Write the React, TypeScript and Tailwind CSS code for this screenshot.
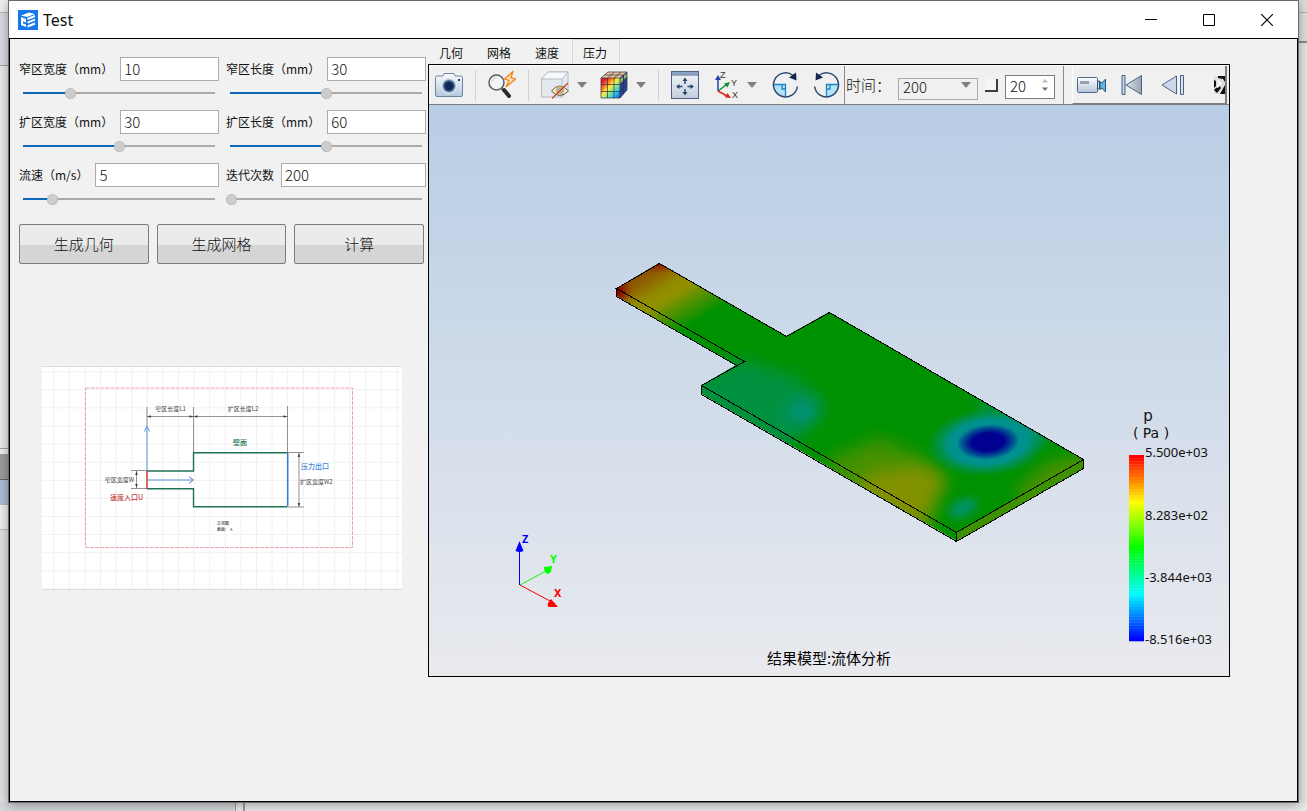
import { ReactNode, useState } from "react";

type SliderFieldProps = {
  id: string;
  label: string;
  initial: number;
  min: number;
  max: number;
};

const SliderField = (props: SliderFieldProps) => {
  const [value, setValue] = useState(props.initial);
  const fill = ((value - props.min) / (props.max - props.min)) * 100;

  return (
    <div className="flex min-w-0 flex-col">
      <div className="flex h-6 items-center gap-[7px]">
        <label htmlFor={props.id} className="shrink-0 text-xs">
          {props.label}
        </label>
        <input
          id={props.id}
          value={value}
          onChange={(e) => setValue(Number(e.target.value) || 0)}
          className="h-6 w-0 min-w-0 flex-1 border border-[#ababab] bg-white px-[3px] pb-0.5 text-[15px] font-light outline-none"
        />
      </div>
      <input
        type="range"
        aria-label={props.label}
        min={props.min}
        max={props.max}
        value={value}
        onChange={(e) => setValue(Number(e.target.value))}
        style={{
          backgroundImage: `linear-gradient(to right, #0d67b8 ${fill}%, #ababab ${fill}%)`,
        }}
        className="h-6 w-full appearance-none bg-transparent bg-[length:calc(100%-8px)_2px] bg-center bg-no-repeat [&::-webkit-slider-thumb]:h-[11px] [&::-webkit-slider-thumb]:w-[11px] [&::-webkit-slider-thumb]:appearance-none [&::-webkit-slider-thumb]:rounded-full [&::-webkit-slider-thumb]:border [&::-webkit-slider-thumb]:border-dotted [&::-webkit-slider-thumb]:border-[#a8a8a8] [&::-webkit-slider-thumb]:bg-[#cdcdcd]"
      />
    </div>
  );
};

const fields: SliderFieldProps[] = [
  { id: "narrow-width", label: "窄区宽度（mm）", initial: 10, min: 2, max: 35 },
  { id: "narrow-length", label: "窄区长度（mm）", initial: 30, min: 0, max: 60 },
  { id: "wide-width", label: "扩区宽度（mm）", initial: 30, min: 0, max: 60 },
  { id: "wide-length", label: "扩区长度（mm）", initial: 60, min: 0, max: 120 },
  { id: "velocity", label: "流速（m/s）", initial: 5, min: 2, max: 22 },
  { id: "iterations", label: "迭代次数", initial: 200, min: 200, max: 1000 },
];

const ActionButton = ({ children }: { children: ReactNode }) => (
  <button className="h-10 rounded-[2px] border border-[#7c7c7c] bg-[linear-gradient(#ebebeb_52%,#d5d5d5_52%)] text-[15px] font-light">
    {children}
  </button>
);

const gridX = Array.from({ length: 23 }, (_, i) => 53.7 + i * 15.6);
const gridY = Array.from({ length: 13 }, (_, i) => 371.7 + i * 18.1);

const Schematic = () => (
  <svg viewBox="42 366 360 224" className="h-auto w-full">
    <rect x="42" y="366" width="360" height="224" fill="#fff" />
    <g stroke="#f1f1f1">
      {gridX.map((x) => (
        <path key={x} d={`M${x} 366V590`} />
      ))}
      {gridY.map((y) => (
        <path key={y} d={`M42 ${y}H402`} />
      ))}
    </g>
    <path d="M42 366.5H402M42 589.5H402" stroke="#dcdcdc" />
    <rect x="85.5" y="388" width="267" height="159.5" fill="none" stroke="#f0a4a8" strokeDasharray="4 1" />
    <g stroke="#777" strokeWidth=".8" fill="none">
      <path d="M147 407V426M193.5 407V453M287.5 406V453M147 416.5H287.5" />
      <path d="M131 470.5H147M131 488.5H147M136.5 471V488M288 452.5H304M288 507H304M299 453V507" />
    </g>
    <path
      d="M147 416.5l4-1.3v2.6zM193.5 416.5l-4-1.3v2.6zM193.5 416.5l4-1.3v2.6zM287.5 416.5l-4-1.3v2.6zM136.5 471l-1.3 4h2.6zM136.5 488l-1.3-4h2.6zM299 453l-1.3 4h2.6zM299 507l-1.3-4h2.6z"
      fill="#444"
    />
    <g fill="none" stroke="#5b8fe0" strokeWidth="1">
      <path d="M147 471V426M144.3 431.5l2.7-5 2.7 5M148 480H193M189 476.7l4.5 3.3-4.5 3.3" />
    </g>
    <path
      d="M147 471H193.5V452.7H287.5M147 488.8H193.5V506.7H287.5"
      fill="none"
      stroke="#1f7551"
      strokeWidth="1.4"
    />
    <path d="M147 471V489" stroke="#cc3a3a" strokeWidth="1.5" />
    <path d="M287.7 453V506" stroke="#2f78e6" strokeWidth="1.5" />
    <g fill="#444" fontSize="6">
      <text x="170.5" y="411" textAnchor="middle">窄区长度L1</text>
      <text x="243" y="411" textAnchor="middle">扩区长度L2</text>
      <text x="134" y="482" textAnchor="end">窄区宽度W</text>
      <text x="300" y="484">扩区宽度W2</text>
    </g>
    <g fontSize="7" fontWeight="500">
      <text x="240" y="445" textAnchor="middle" fill="#1f7551">壁面</text>
      <text x="301" y="469" fill="#3d85dc">压力出口</text>
      <text x="110" y="500" fill="#c63d3d">速度入口U</text>
    </g>
    <g fontSize="4" fill="#222">
      <text x="217" y="525">正视图</text>
      <text x="217" y="531">截面：  A</text>
    </g>
  </svg>
);

const ToolButton = ({ label, children }: { label: string; children: ReactNode }) => (
  <button aria-label={label} className="flex shrink-0 items-center">
    {children}
  </button>
);

const Separator = () => <div className="mx-3 h-[31px] w-px shrink-0 bg-[#d0d0d0]" />;

const Arrow = ({ label }: { label: string }) => (
  <ToolButton label={label}>
    <svg width="10" height="6" viewBox="0 0 10 6">
      <path d="M0 0h10L5 6z" fill="#808080" />
    </svg>
  </ToolButton>
);

const CameraIcon = () => (
  <svg width="28" height="28" viewBox="0 0 28 28">
    <defs>
      <linearGradient id="cam" x2="0" y2="1">
        <stop stopColor="#fdfdff" />
        <stop offset="1" stopColor="#b3c8dd" />
      </linearGradient>
    </defs>
    <path d="M2 5h6l1-2.500h10L20 5h6q1.500 0 1.500 1.500V24q0 1.500-1.500 1.500H2Q.500 25.500.500 24V6.500Q.500 5 2 5z" fill="url(#cam)" stroke="#6c84a6" />
    <circle cx="14" cy="15" r="7.500" fill="#a9bccf" stroke="#e8eff6" />
    <circle cx="14" cy="15" r="6" fill="#4d6a92" />
    <circle cx="14" cy="15" r="4.500" fill="#10275a" />
    <path d="M23 9h2" stroke="#24406f" strokeWidth="2" />
  </svg>
);

const MagnifierIcon = () => (
  <svg width="28" height="28" viewBox="0 0 28 28">
    <path d="M13 17l3 3" stroke="#777" strokeWidth="2" />
    <path d="M16 19l5 6" stroke="#2b2b2b" strokeWidth="4" strokeLinecap="round" />
    <circle cx="8.500" cy="11.500" r="7.500" fill="#f3f6f8" stroke="#5a5d61" strokeWidth="1.500" />
    <path d="M4 11q1-4.500 5-4.500" stroke="#cfd8e0" fill="none" strokeWidth="1.500" />
    <path d="M25 .500L16.500 8l4.500 1.500L18 16 27.500 8 23 6.500z" fill="#ffe0b0" stroke="#f08519" strokeWidth="1.300" />
  </svg>
);

const HideCubeIcon = () => (
  <svg width="28" height="28" viewBox="0 0 28 28">
    <path d="M.500 8L7 1h20v18l-6 7H.500z" fill="#e4e9f0" stroke="#b4bbc7" />
    <path d="M.500 8L7 1h20l-6 7zM21 8v18" fill="#f7f9fb" stroke="#b4bbc7" />
    <path d="M10.500 20q8-10 17 0-9 9-17 0z" fill="#f8ebc2" stroke="#555b66" />
    <circle cx="19" cy="19.500" r="3.500" fill="#9fb2c6" stroke="#d9b25a" strokeWidth="1.500" />
    <path d="M11 27.500L27 12" stroke="#d2452d" strokeWidth="1.300" />
  </svg>
);

const ColorCubeIcon = () => (
  <svg width="28" height="28" viewBox="0 0 28 28">
    <defs>
      <linearGradient id="cube" x2="1" y2="1">
        <stop offset=".15" stopColor="#e8202a" />
        <stop offset=".32" stopColor="#ff8a1e" />
        <stop offset=".45" stopColor="#ffee3a" />
        <stop offset=".6" stopColor="#8fe58a" />
        <stop offset=".78" stopColor="#28c6ee" />
        <stop offset="1" stopColor="#1550c8" />
      </linearGradient>
    </defs>
    <path d="M1 7h19v20H1z" fill="url(#cube)" />
    <path d="M1 7l7-6h19l-7 6z" fill="#eac39f" />
    <path d="M20 7l7-6v18l-7 8z" fill="#27429c" />
    <path d="M20 8l3-2v4l-3 3zM24 4.500l3-2v3l-3 3z" fill="#93b95e" />
    <path
      d="M1 7h19v20H1zM1 13.500h19M1 20.500h19M7.500 7v20M14 7v20M1 7l7-6h19l-7 6M20 27l7-8V1M7.500 7l7-6M14 7l7-6M4.500 4h19v19M20 13.500l7-6M20 20.500l7-7"
      fill="none"
      stroke="#2b3040"
      strokeWidth=".7"
    />
  </svg>
);

const FitIcon = () => (
  <svg width="28" height="28" viewBox="0 0 28 28">
    <defs>
      <linearGradient id="fit" x2="0" y2="1">
        <stop stopColor="#f4f6fa" />
        <stop offset="1" stopColor="#c3cddd" />
      </linearGradient>
    </defs>
    <rect x=".5" y=".5" width="27" height="27" fill="url(#fit)" stroke="#4e6284" />
    <path d="M1 1h26v2.500H1z" fill="#8aa3c8" />
    <path d="M1 4h26" stroke="#4e6284" />
    <path d="M14 13V9M14 18v4M11.500 15.500h-4M16.500 15.500h4" stroke="#2a4470" strokeWidth="1.400" />
    <path d="M14 6.500l2.500 3.500h-5zM14 24.500l2.500-3.500h-5zM5 15.500l3.500-2.500v5zM23 15.500L19.500 13v5z" fill="#2a4470" />
  </svg>
);

const AxesIcon = () => (
  <svg width="26" height="30" viewBox="0 0 26 30">
    <path d="M3 21V9" stroke="#2244a8" strokeWidth="1.500" />
    <path d="M3 5l3 5H0z" fill="#2244a8" />
    <path d="M3 21l8-6" stroke="#15893c" strokeWidth="1.500" />
    <path d="M15 12l-2.500 5.500-3.500-4z" fill="#15893c" />
    <path d="M3 21l9 5" stroke="#e2201d" strokeWidth="1.500" />
    <path d="M16 28l-6-.500 2.500-4.500z" fill="#e2201d" />
    <g fontSize="9" fill="#333" fontFamily="Liberation Sans, sans-serif">
      <text x="5" y="8">Z</text>
      <text x="16" y="16">Y</text>
      <text x="17" y="28">X</text>
    </g>
  </svg>
);

const RotateIcon = ({ mirrored }: { mirrored?: boolean }) => (
  <svg width="27" height="28" viewBox="0 0 27 28" className={mirrored ? "-scale-x-100" : ""}>
    <path d="M1.500 14H13.500v12A12 12 0 0 1 1.500 14z" fill="#b5e2f7" />
    <path d="M1.500 13.500H13.500v12.500M10 13.500V18h3.500" fill="none" stroke="#1b86c4" strokeWidth="1.300" />
    <path d="M21 4.500A12 12 0 1 0 25.400 15.500" fill="none" stroke="#2c4772" strokeWidth="1.500" />
    <path d="M24 1.500L24.500 9.500 17 6.500z" fill="#15284f" />
  </svg>
);

const VideoIcon = () => (
  <svg width="30" height="18" viewBox="0 0 30 18">
    <defs>
      <linearGradient id="vid" x2="0" y2="1">
        <stop stopColor="#fff" />
        <stop offset="1" stopColor="#b4c3da" />
      </linearGradient>
    </defs>
    <rect x=".5" y="1.500" width="20" height="15" rx="1" fill="url(#vid)" stroke="#4f668c" />
    <rect x="3" y="5" width="9" height="3" fill="#9aa0a8" />
    <path d="M20.500 5h2v8h-2z" fill="#c9d8e8" stroke="#31547d" />
    <path d="M23 5.500l2 1.500 3.500-4v13L25 12l-2 1.500z" fill="#5cb5dd" stroke="#31547d" />
  </svg>
);

const FirstIcon = () => (
  <svg width="22" height="22" viewBox="0 0 22 22">
    <defs>
      <linearGradient id="first" x2="1">
        <stop stopColor="#dde1e7" />
        <stop offset="1" stopColor="#9aa2ae" />
      </linearGradient>
    </defs>
    <path d="M1 1.500h3v19H1z" fill="#c5d2e4" stroke="#4a6288" />
    <path d="M20.500 1.500v19L5 11z" fill="url(#first)" stroke="#4a6288" />
  </svg>
);

const BackIcon = () => (
  <svg width="24" height="22" viewBox="0 0 24 22">
    <path d="M15.500 2v18L1 11z" fill="#cdd9e9" stroke="#4a6288" />
    <path d="M19.500 1.500h3v19h-3z" fill="#dce5f0" stroke="#4a6288" />
  </svg>
);

const Toolbar = () => (
  <div className="flex h-10 items-center overflow-hidden border-y border-t-white border-b-[#7d7d7d] bg-[#f0f0f0] pl-1.5">
    <ToolButton label="截图"><CameraIcon /></ToolButton>
    <Separator />
    <ToolButton label="缩放"><MagnifierIcon /></ToolButton>
    <Separator />
    <div className="flex items-center gap-2">
      <ToolButton label="隐藏"><HideCubeIcon /></ToolButton>
      <Arrow label="隐藏选项" />
    </div>
    <div className="ml-[13px] flex items-center gap-2">
      <ToolButton label="云图"><ColorCubeIcon /></ToolButton>
      <Arrow label="云图选项" />
    </div>
    <Separator />
    <ToolButton label="适应窗口"><FitIcon /></ToolButton>
    <div className="mr-[15px] ml-4 flex items-center gap-1.5">
      <ToolButton label="视角"><AxesIcon /></ToolButton>
      <Arrow label="视角选项" />
    </div>
    <div className="flex items-center gap-3.5">
      <ToolButton label="顺时针旋转"><RotateIcon /></ToolButton>
      <ToolButton label="逆时针旋转"><RotateIcon mirrored /></ToolButton>
    </div>
    <div className="ml-1 flex h-full shrink-0 items-center gap-[7px] border-x border-[#8a8a8a] pr-2 pl-px">
      <label htmlFor="time" className="text-[15px] font-light">时间：</label>
      <div className="relative h-[22px] w-20">
        <select
          id="time"
          className="h-full w-full appearance-none border border-[#ababab] bg-transparent pb-1 pl-1 text-[15px] leading-4 font-light"
        >
          <option>200</option>
        </select>
        <svg width="10" height="6" viewBox="0 0 10 6" className="pointer-events-none absolute top-2 right-[7px]">
          <path d="M0 0h10L5 6z" fill="#808080" />
        </svg>
      </div>
      <input
        type="checkbox"
        aria-label="循环"
        className="size-[13px] appearance-none border-r-2 border-b-2 border-[#3c3c3c] bg-[#f6f6f6]"
      />
      <div className="relative h-6 w-[50px]">
        <input
          type="number"
          aria-label="间隔"
          defaultValue={20}
          className="h-full w-full border border-[#7c7c7c] bg-white pb-0.5 pl-1 text-[15px] font-light outline-none [appearance:textfield] [&::-webkit-inner-spin-button]:appearance-none"
        />
        <svg width="6" height="12" viewBox="0 0 6 12" className="pointer-events-none absolute top-1.5 right-[7px]">
          <path d="M0 3.500L3 0l3 3.500z" fill="#bdbdbd" />
          <path d="M0 8.500h6L3 12z" fill="#707070" />
        </svg>
      </div>
    </div>
    <div className="mr-0.5 ml-2 flex h-full min-w-0 flex-1 items-center border-r-2 border-b border-l border-[#7d7d7d] border-l-white pl-1">
      <ToolButton label="录像"><VideoIcon /></ToolButton>
      <div className="ml-3.5 flex flex-1 items-center gap-[18px]">
        <ToolButton label="首帧"><FirstIcon /></ToolButton>
        <ToolButton label="后退"><BackIcon /></ToolButton>
      </div>
      <ToolButton label="更多">
        <svg width="11" height="18" viewBox="0 0 11 18">
          <path d="M0 0h11v18H0z" fill="#dedede" />
          <path d="M4 0h7v6L9 3 4 2zM0 4l2 1v5l-2 2zM0 14l5-5 2 3-4 5zM6 18l5-9v9z" fill="#111" />
          <path d="M2 3l6 4-4 5-2-1 3-4z" fill="#fff" />
        </svg>
      </ToolButton>
    </div>
  </div>
);

const BANDS = 60;
const BAR_TOP = 455;
const BAR_HEIGHT = 186;

const legend = [
  { y: 457, text: "5.500e+03" },
  { y: 520, text: "8.283e+02" },
  { y: 582, text: "-3.844e+03" },
  { y: 644, text: "-8.516e+03" },
];

const Scene = () => (
  <svg viewBox="429 105 800 571" className="h-auto w-full bg-[linear-gradient(#b8cde5,#e9eaee)]">
    <defs>
      <linearGradient id="inlet" gradientUnits="userSpaceOnUse" x1="638" y1="275" x2="673" y2="335">
        <stop stopColor="#8c5000" />
        <stop offset=".15" stopColor="#906200" />
        <stop offset=".33" stopColor="#918800" />
        <stop offset=".5" stopColor="#919100" />
        <stop offset=".62" stopColor="#6f9100" />
        <stop offset="1" stopColor="#009100" />
      </linearGradient>
      <radialGradient id="vortex">
        <stop stopColor="#000091" />
        <stop offset=".24" stopColor="#000091" />
        <stop offset=".38" stopColor="#004f91" />
        <stop offset=".48" stopColor="#009191" />
        <stop offset=".6" stopColor="#00918c" />
        <stop offset=".8" stopColor="#009150" stopOpacity=".6" />
        <stop offset="1" stopColor="#009100" stopOpacity="0" />
      </radialGradient>
      <filter id="soft4" x="-50%" y="-50%" width="200%" height="200%"><feGaussianBlur stdDeviation="4" /></filter>
      <filter id="soft8" x="-50%" y="-50%" width="200%" height="200%"><feGaussianBlur stdDeviation="8" /></filter>
      <clipPath id="body">
        <path d="M659 263L786 336L829 312L1083 459V468L957 541L702 394V385L736 365L617 296V288z" />
      </clipPath>
    </defs>

    <g clipPath="url(#body)">
      <path d="M600 250H1100V560H600z" fill="#009100" />
      <path d="M610 250H750V330L690 360L610 330z" fill="url(#inlet)" />
      <ellipse cx="659" cy="262" rx="13" ry="5" fill="#900000" filter="url(#soft4)" />
      <ellipse cx="616" cy="291" rx="10" ry="11" fill="#900000" filter="url(#soft4)" />
      <path d="M738 358L690 385V400L785 450L815 425L822 400L795 376z" fill="#009140" filter="url(#soft8)" />
      <ellipse cx="802" cy="411" rx="17" ry="11" transform="rotate(-20 802 411)" fill="#009178" filter="url(#soft8)" />
      <ellipse cx="802" cy="412" rx="8" ry="4" fill="#00917c" filter="url(#soft4)" />
      <path d="M880 438L918 455L950 478L930 520L840 485L825 460z" fill="#459100" filter="url(#soft8)" />
      <path d="M870 472L920 466L943 478L926 515L932 535L850 494z" fill="#829100" filter="url(#soft8)" />
      <ellipse cx="1010" cy="418" rx="36" ry="14" transform="rotate(28 1010 418)" fill="#00914c" filter="url(#soft8)" />
      <ellipse cx="1022" cy="432" rx="20" ry="12" fill="#009188" filter="url(#soft8)" />
      <ellipse cx="988" cy="442" rx="66" ry="37" transform="rotate(-5 988 442)" fill="url(#vortex)" />
      <path d="M1085 452L1045 464L1018 488L1020 510L1090 480z" fill="#489100" filter="url(#soft8)" />
      <ellipse cx="963" cy="508" rx="15" ry="8" transform="rotate(-25 963 508)" fill="#00916c" filter="url(#soft4)" />
      <path d="M957 532L1083 459V469L957 542z" fill="#3e9100" />
    </g>
    <path
      d="M659.500 263.500L786.500 336.500L829.500 312.500L1083.500 459.500V468.500L956.500 541.500L701.500 394.500V385.500L744.500 361.500L616.500 288.500zM616.500 288.500V296.500L736.500 365.500M701.500 385.500L956.500 532.500L1083.500 459.500M956.500 532.500V541.500"
      fill="none"
      stroke="#000"
      shapeRendering="crispEdges"
    />

    {/* coordinate axes */}
    <path d="M519.500 585V550" stroke="#00f" />
    <path d="M519.500 541l4 10q-4 2-8 0z" fill="#00f" />
    <path d="M520 585l26-14" stroke="#0f0" />
    <path d="M552 566l-8 1q0 6 4 7l3-2z" fill="#0f0" />
    <path d="M520 585l30 16" stroke="#f00" />
    <path d="M558 607h-9q-2-1-1-4l3-4z" fill="#f00" />
    <g fontSize="11" fontWeight="700" fontFamily="Noto Sans, sans-serif">
      <text x="522" y="543" fill="#00f">Z</text>
      <text x="550" y="563" fill="#0f0">Y</text>
      <text x="554" y="597" fill="#f00">X</text>
    </g>

    {/* pressure legend */}
    {Array.from({ length: BANDS }, (_, i) => (
      <rect
        key={i}
        x="1129"
        y={BAR_TOP + (i * BAR_HEIGHT) / BANDS}
        width="15"
        height={BAR_HEIGHT / BANDS + 0.3}
        fill={`hsl(${(i / (BANDS - 1)) * 240} 100% 50%)`}
      />
    ))}
    <g fontFamily="Noto Sans, sans-serif" fill="#111">
      {legend.map((item) => (
        <text key={item.text} x="1145" y={item.y} fontSize="13">{item.text}</text>
      ))}
    </g>
    <g fontFamily="DejaVu Sans, sans-serif" fill="#111" textAnchor="middle">
      <text x="1148" y="421" fontSize="15">p</text>
      <text x="1151" y="438" fontSize="14">(&nbsp;Pa&nbsp;)</text>
    </g>
    <text x="829" y="664" fontSize="15" textAnchor="middle">结果模型:流体分析</text>
  </svg>
);

const tabs = ["几何", "网格", "速度", "压力"];

const Viewer = () => {
  const [active, setActive] = useState("压力");

  return (
    <section className="mr-[67px] min-w-0 flex-1">
      <div role="tablist" className="flex h-[25px]">
        {tabs.map((tab) => (
          <button
            key={tab}
            role="tab"
            aria-selected={tab === active}
            onClick={() => setActive(tab)}
            className={
              tab === active
                ? "w-12 border border-b-0 border-[#d9d9d9] pt-px pr-0.5 text-xs"
                : "w-12 border border-b-0 border-transparent pt-px pr-0.5 text-xs"
            }
          >
            {tab}
          </button>
        ))}
      </div>
      <div className="flex flex-col border border-black">
        <Toolbar />
        <Scene />
      </div>
    </section>
  );
};

const TitleBar = () => (
  <header className="flex h-[37px] items-center bg-white pr-0.5 pl-[9px]">
    <svg width="20" height="20" viewBox="0 0 20 20">
      <path d="M0 0h20v20H0z" fill="#1677ea" />
      <path d="M3 5.500l8-3 6 1.500-8 3zM3 7v8l5 2V14.500l-3-1v-2l3 1V9z" fill="#fff" />
      <path d="M9.500 9L17 6M9.500 12.700l7.500-3M9.500 16.500l7.500-3" fill="none" stroke="#fff" strokeWidth="1.900" />
    </svg>
    <h1 className="ml-[5px] flex-1 font-['Noto_Sans'] text-base">Test</h1>
    <button aria-label="最小化" className="flex h-full w-[58px] items-center justify-center">
      <svg width="12" height="12" viewBox="0 0 12 12"><path d="M0 5.500h12" stroke="#000" /></svg>
    </button>
    <button aria-label="最大化" className="flex h-full w-[58px] items-center justify-center">
      <svg width="12" height="12" viewBox="0 0 12 12"><path d="M.5.500h11v11H.5z" fill="none" stroke="#000" /></svg>
    </button>
    <button aria-label="关闭" className="flex h-full w-[58px] items-center justify-center">
      <svg width="12" height="12" viewBox="0 0 12 12"><path d="M0 0l12 12M12 0L0 12" stroke="#000" strokeWidth="1.200" /></svg>
    </button>
  </header>
);

export default function App() {
  return (
    <div className="flex min-h-screen flex-col bg-[#e9e9ea] font-['Noto_Sans_CJK_SC',sans-serif] text-[#111]">
      <div className="flex flex-1">
        {/* edge of the window behind */}
        <div className="flex w-2 flex-col bg-[#dfe0e3]">
          <div className="h-[13px] border-b border-[#b5b5b5] bg-[#eee]" />
          <div className="h-[53px] border-b border-[#98a2ac] bg-[#d8dbdf]" />
          <div className="h-[383px] border-b border-[#98a2ac] bg-[#e8e8e8]" />
          <div className="h-[5px] bg-[#eee]" />
          <div className="h-[26px] border-b border-[#666] bg-[#9a9c9e]" />
          <div className="h-[25px] bg-[#a9bdd4]" />
          <div className="h-[25px] border-b border-[#bbb] bg-[#eee]" />
        </div>
        <main className="relative flex min-w-0 flex-1 flex-col border border-[#6b6b6b] shadow-[0_2px_10px_rgba(0,0,0,0.35)]">
          <TitleBar />
          <div className="flex flex-1 border border-black bg-[#f1f1f1]">
            <aside className="w-[418px] shrink-0 pt-[18px] pr-0.5 pl-[9px]">
              <div className="grid grid-cols-2 gap-x-[7px] gap-y-[5px]">
                {fields.map((field) => (
                  <SliderField key={field.id} {...field} />
                ))}
              </div>
              <div className="mt-[13px] mr-0.5 grid grid-cols-3 gap-2">
                <ActionButton>生成几何</ActionButton>
                <ActionButton>生成网格</ActionButton>
                <ActionButton>计算</ActionButton>
              </div>
              <div className="mt-[102px] mr-6 ml-[23px]">
                <Schematic />
              </div>
            </aside>
            <Viewer />
          </div>
        </main>
        <div className="flex w-2 flex-col bg-[#e4e4e4]">
          <div className="h-[13px] border-b border-[#b5b5b5] bg-[#ddd]" />
          <div className="h-[30px] border-b-2 border-[#8a8a8a] bg-[#ddd]" />
        </div>
      </div>
      <div className="flex h-2">
        <div className="w-[236px] border-r border-[#999] bg-[#d5d7da]" />
        <div className="w-[9px] border-r-2 border-[#999]" />
      </div>
    </div>
  );
}
